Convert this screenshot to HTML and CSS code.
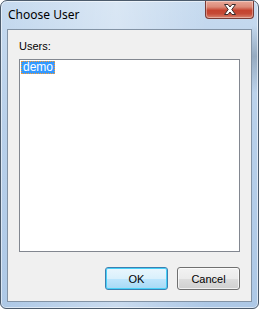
FILE: index.html
```html
<!DOCTYPE html>
<html>
<head>
    <title>Choose User</title>
    <link rel="stylesheet" href="styles.css">
</head>
<body>

    <div class="window">
        <div class="titlebar">
            <span class="title">Choose User</span>
            <div class="close-btn">
                <svg width="14" height="11" viewBox="0 0 14 11">
                    <path d="M1.5 0.5 H5 L7 3 L9 0.5 H12.5 L8.8 5.5 L12.5 10.5 H9 L7 8 L5 10.5 H1.5 L5.2 5.5 Z" fill="#ffffff" stroke="#3b2a2a" stroke-width="1" stroke-linejoin="round"/>
                </svg>
            </div>
        </div>

        <div class="client">
            <div class="label">Users:</div>
            <div class="listbox">
                <div class="item selected">demo</div>
            </div>
            <div class="buttons">
                <button class="default">OK</button>
                <button>Cancel</button>
            </div>
        </div>
    </div>

</body>
</html>
```

FILE: styles.css
```css
body {
    margin: 0;
    background-color: #ffffff;
    font-family: "Liberation Sans", Arial, sans-serif;
}

.window {
    width: 259px;
    height: 309px;
    box-sizing: border-box;
    border: 1px solid #4c5b6c;
    border-radius: 7px 7px 6px 6px;
    padding: 0 6px 6px 6px;
    background:
        linear-gradient(180deg, rgba(255,255,255,0) 8%, rgba(70,90,110,0.35) 18%, rgba(255,255,255,0) 30%) right / 6px 100% no-repeat,
        linear-gradient(90deg, rgba(255,255,255,0) 0%, rgba(255,255,255,0.35) 45%, rgba(255,255,255,0) 80%),
        linear-gradient(180deg, #c6daef 0%, #b8d0ea 40%, #adc8e6 100%);
    box-shadow: inset 0 0 0 1px rgba(255,255,255,0.55);
    display: flex;
    flex-direction: column;
}

.titlebar {
    height: 28px;
    display: flex;
    justify-content: space-between;
    align-items: flex-start;
}

.title {
    font-family: "Noto Sans", "Open Sans", sans-serif;
    font-size: 12px;
    line-height: 16px;
    color: #000000;
    padding: 6px 0 0 1px;
}

.close-btn {
    width: 49px;
    height: 18px;
    box-sizing: border-box;
    margin-right: -2px;
    border: 1px solid #7a3b35;
    border-top: none;
    border-radius: 0 0 4px 4px;
    background: linear-gradient(180deg, #e9a898 0%, #dc8a78 35%, #c5432f 55%, #c54a36 75%, #d98570 100%);
    box-shadow: inset 0 0 0 1px rgba(255,255,255,0.35);
    display: flex;
    align-items: center;
    justify-content: center;
}

.client {
    flex: 1;
    border: 1px solid #8393a5;
    background-color: #f0f0f0;
    padding: 10px 11px 10px 11px;
    display: flex;
    flex-direction: column;
}

.label {
    font-size: 11px;
    line-height: 13px;
    color: #000000;
}

.listbox {
    margin-top: 6px;
    height: 193px;
    box-sizing: border-box;
    border: 1px solid #828790;
    background-color: #ffffff;
    padding: 1px;
}

.item {
    width: fit-content;
    font-size: 12px;
    line-height: 11px;
    padding: 0 1px;
}

.selected {
    background-color: #3399ff;
    color: #ffffff;
    border: 1px dotted #ff9a2e;
}

.buttons {
    margin-top: 15px;
    display: flex;
    justify-content: flex-end;
    gap: 9px;
}

button {
    width: 63px;
    height: 23px;
    font-family: "Liberation Sans", Arial, sans-serif;
    font-size: 11px;
    color: #000000;
    border: 1px solid #707070;
    border-radius: 3px;
    background: linear-gradient(180deg, #f2f2f2 0%, #ebebeb 50%, #dddddd 51%, #cfcfcf 100%);
    box-shadow: inset 0 0 0 1px rgba(255,255,255,0.7);
    padding: 0;
}

button.default {
    border-color: #3c7fb1;
    background: linear-gradient(180deg, #eaf6fd 0%, #d9f0fc 50%, #bee6fd 51%, #a7d9f5 100%);
    box-shadow: inset 0 0 0 1px #48d1f8;
}
```
